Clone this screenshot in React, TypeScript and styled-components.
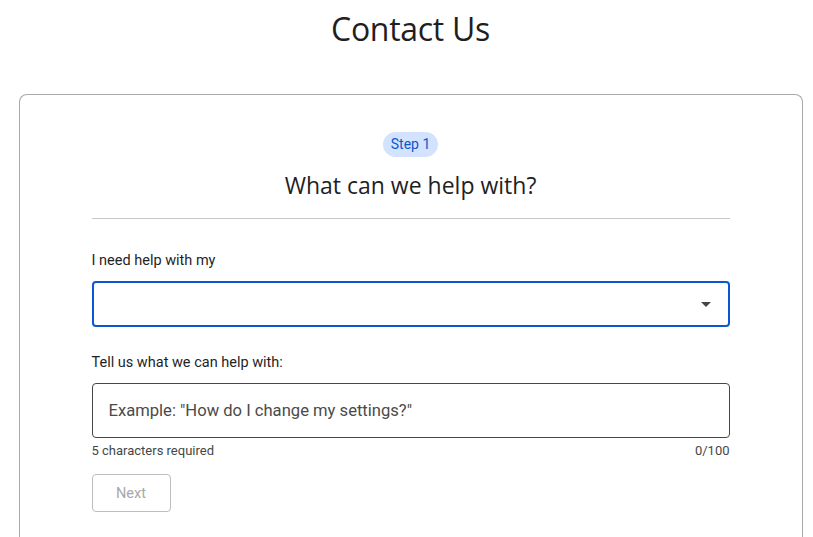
import React from "react";
import styled, { createGlobalStyle } from "styled-components";

const Global = createGlobalStyle`
  html, body { margin: 0; padding: 0; background: #fff; }
  body { font-family: Roboto, "Noto Sans", sans-serif; color: #1f1f1f; }
  * { box-sizing: border-box; }
`;

const Page = styled.div`
  display: flex;
  flex-direction: column;
  align-items: center;
  padding: 0 11px 0 19px;
  height: 537px;
  overflow: hidden;
`;

const Title = styled.h1`
  margin: 9px 0 0;
  font-family: "Open Sans", Roboto, sans-serif;
  font-weight: 400;
  font-size: 32px;
  line-height: 40px;
  color: #1f1f1f;
  letter-spacing: -0.3px;
`;

const Card = styled.section`
  margin-top: 45px;
  width: 784px;
  flex: 1;
  border: 1px solid #a8a8a8;
  border-bottom: none;
  border-radius: 8px 8px 0 0;
  padding: 37px 72px 0 72px;
  display: flex;
  flex-direction: column;
`;

const Header = styled.div`
  display: flex;
  flex-direction: column;
  align-items: center;
  border-bottom: 1px solid #c7c7c7;
  padding-bottom: 18px;
`;

const Badge = styled.span`
  background: #d3e3fd;
  color: #0b57d0;
  font-size: 14px;
  line-height: 25px;
  height: 25px;
  padding: 0 8px;
  border-radius: 13px;
`;

const Heading = styled.h2`
  margin: 13px 0 0;
  font-family: "Open Sans", Roboto, sans-serif;
  font-weight: 400;
  font-size: 23px;
  line-height: 30px;
  color: #1f1f1f;
`;

const Label = styled.label<{ $top: number }>`
  display: block;
  margin-top: ${(p) => p.$top}px;
  font-size: 14.5px;
  line-height: 20px;
  color: #1f1f1f;
`;

const SelectBox = styled.div`
  margin-top: 10px;
  height: 46px;
  border: 2px solid #0b57d0;
  border-radius: 4px;
  display: flex;
  align-items: center;
  justify-content: flex-end;
  padding-right: 17px;
`;

const Arrow = styled.span`
  width: 0;
  height: 0;
  border-left: 5px solid transparent;
  border-right: 5px solid transparent;
  border-top: 5px solid #444746;
`;

const InputBox = styled.div`
  margin-top: 10px;
  height: 55px;
  border: 1px solid #444746;
  border-radius: 4px;
  display: flex;
  align-items: center;
  padding-left: 16px;
  font-size: 16.6px;
  color: #4a4a4a;
`;

const HelperRow = styled.div`
  display: flex;
  justify-content: space-between;
  margin-top: 4px;
  font-size: 13px;
  line-height: 17px;
  color: #444746;
`;

const NextButton = styled.button`
  margin-top: 15px;
  align-self: flex-start;
  width: 79px;
  height: 38px;
  background: #fff;
  border: 1px solid #bdbdbd;
  border-radius: 4px;
  font-family: Roboto, sans-serif;
  font-size: 14.5px;
  color: #a8a8a8;
`;

export default function App() {
  return (
    <>
      <Global />
      <Page>
        <Title>Contact Us</Title>
        <Card>
          <Header>
            <Badge>Step 1</Badge>
            <Heading>What can we help with?</Heading>
          </Header>
          <Label $top={32}>I need help with my</Label>
          <SelectBox>
            <Arrow />
          </SelectBox>
          <Label $top={26}>Tell us what we can help with:</Label>
          <InputBox>Example: "How do I change my settings?"</InputBox>
          <HelperRow>
            <span>5 characters required</span>
            <span>0/100</span>
          </HelperRow>
          <NextButton disabled>Next</NextButton>
        </Card>
      </Page>
    </>
  );
}
